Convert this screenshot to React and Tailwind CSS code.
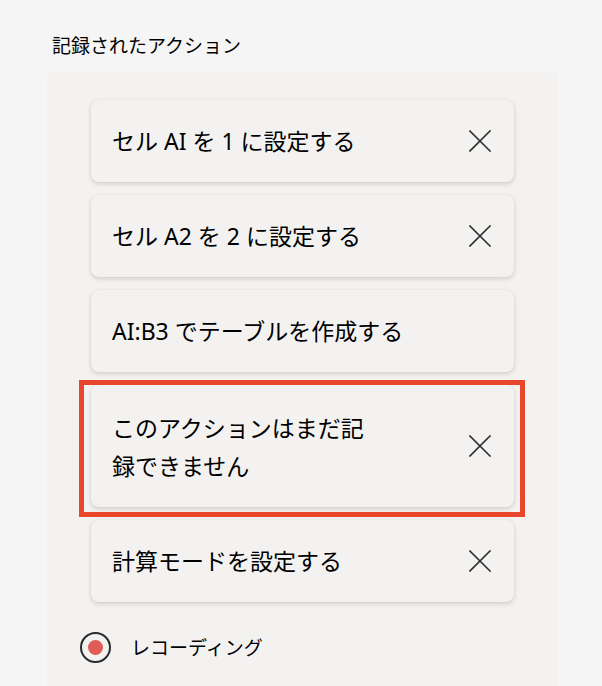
import React from "react";

function CloseIcon() {
  return (
    <svg width="22" height="22" viewBox="0 0 22 22" fill="none" className="shrink-0">
      <path d="M1 1 L21 21 M21 1 L1 21" stroke="#2f2f2f" strokeWidth="1.6" strokeLinecap="square" />
    </svg>
  );
}

function Card({ children, close = true, textClass = "" }) {
  return (
    <div className="flex items-center justify-between rounded-[8px] bg-[#f3f2f1] pl-[21px] pr-[23px] py-[22px] shadow-[0_2px_5px_rgba(0,0,0,0.14),0_0_2px_rgba(0,0,0,0.06)]">
      <div className={"text-[23px] leading-[38px] text-black " + textClass}>{children}</div>
      {close && <CloseIcon />}
    </div>
  );
}

export default function App() {
  return (
    <div className="flex h-[686px] w-[602px] flex-col bg-[#f5f5f5] pl-[47px] pr-[44px] font-['Noto_Sans','Noto_Sans_CJK_JP',sans-serif]">
      <div className="ml-[5px] pt-[33px] text-[19px] leading-[26px] text-black">記録されたアクション</div>
      <div className="mt-[14px] flex flex-1 flex-col bg-[#f3f2f1] px-[44px] pt-[27px]">
        <div className="flex flex-col gap-[13px]">
          <Card>セル AI を 1 に設定する</Card>
          <Card>セル A2 を 2 に設定する</Card>
          <Card close={false}>AI:B3 でテーブルを作成する</Card>
          <div className="relative">
            <Card textClass="max-w-[258px] pt-[2px]">このアクションはまだ記録できません</Card>
            <div className="pointer-events-none absolute -top-[5px] -left-[12px] -right-[11px] -bottom-[10px] border-[5px] border-[#e8472c]" />
          </div>
          <Card>計算モードを設定する</Card>
        </div>
        <div className="mt-[30px] -ml-[11px] flex items-center gap-[20px]">
          <div className="flex h-[31px] w-[31px] items-center justify-center rounded-full border-[2.5px] border-[#2b2b2b]">
            <div className="h-[15px] w-[15px] rounded-full bg-[#e05d57]" />
          </div>
          <span className="text-[19px] leading-[26px] text-black">レコーディング</span>
        </div>
      </div>
    </div>
  );
}
